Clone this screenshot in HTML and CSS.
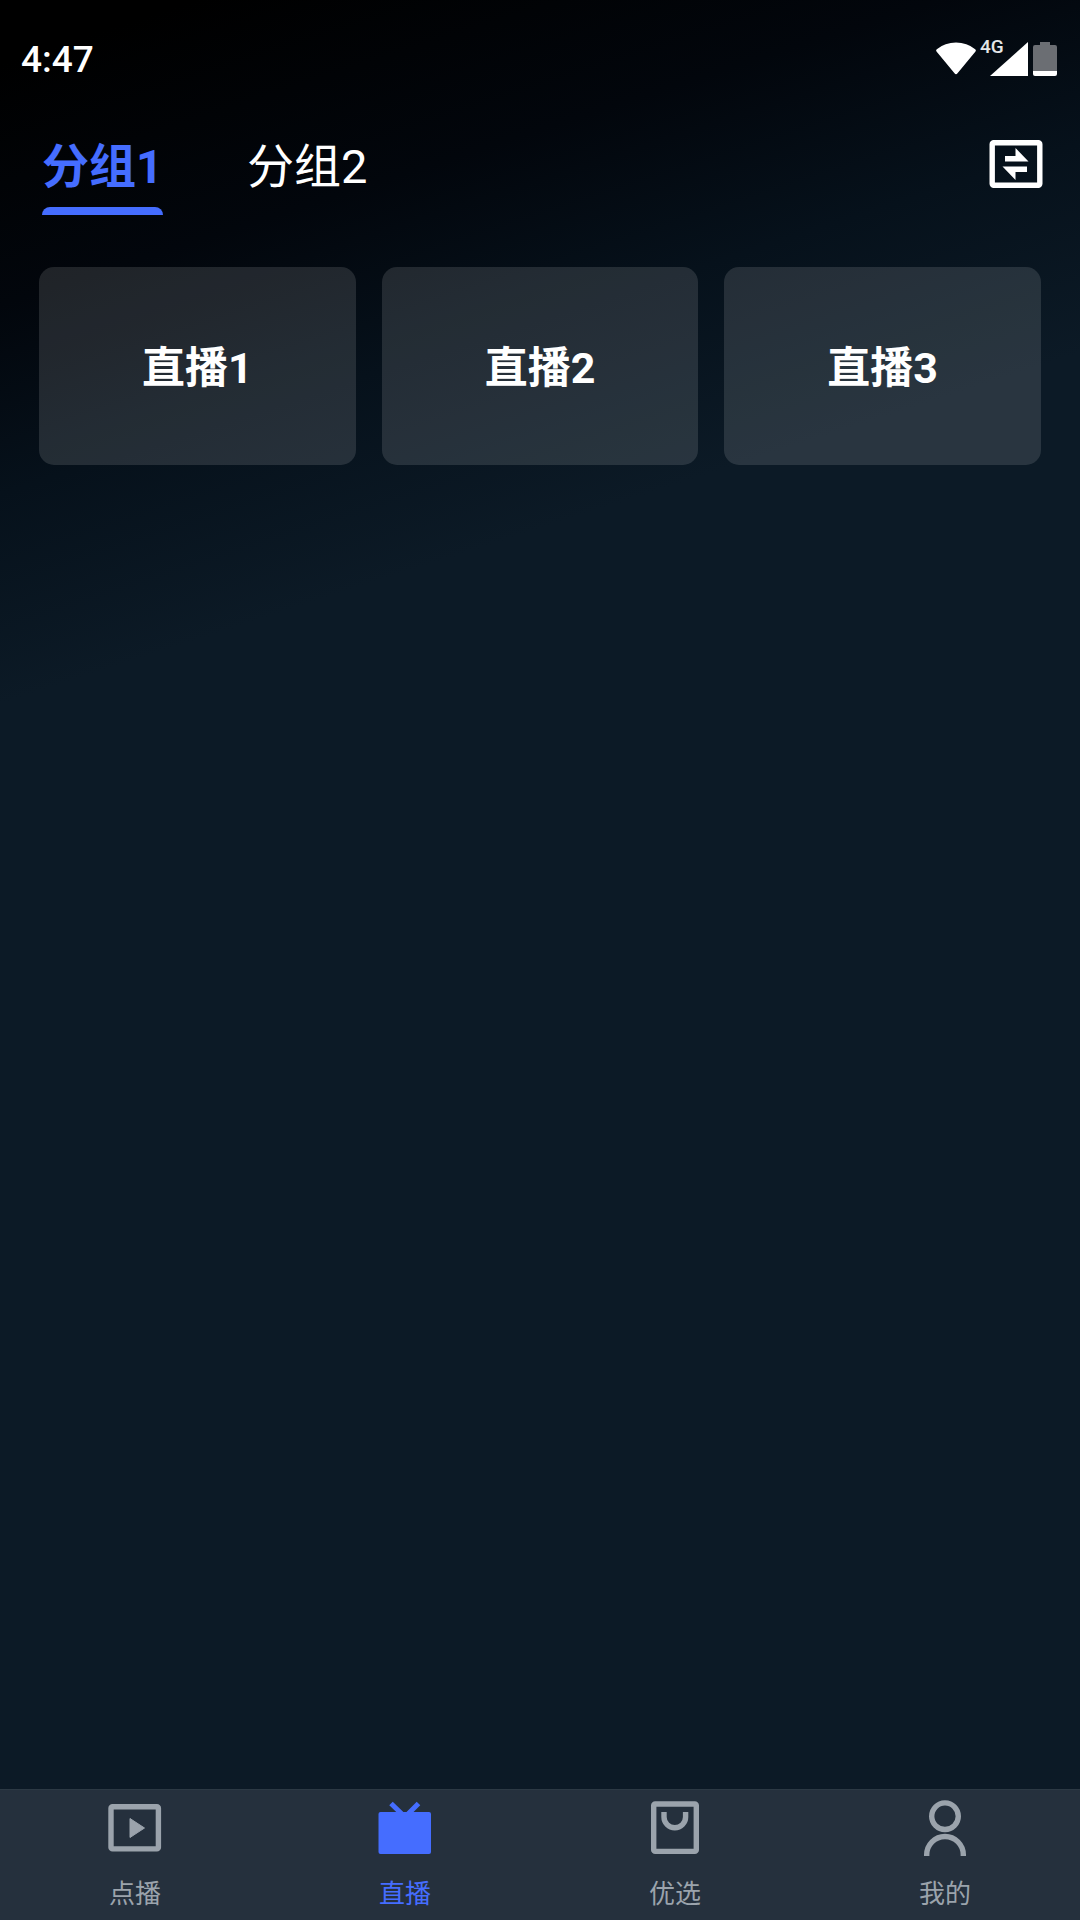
FILE: index.html
```html
<!DOCTYPE html>
<html lang="zh-CN">
<head>
<meta charset="utf-8">
<meta name="viewport" content="width=device-width, initial-scale=1">
<title>直播</title>
<link rel="stylesheet" href="styles.css">
</head>
<body>
<div class="app">
  <div class="status">
    <time class="clock">4:47</time>
    <div class="indicators">
      <svg class="wifi" width="42" height="34" viewBox="0 0 42 34" aria-hidden="true"><path d="M1.800 7.200Q10 .5 21 .5T40.200 7.200Q41.500 8.200 40.500 9.500L22.500 31.300Q21 33 19.500 31.300L1.500 9.500Q.5 8.200 1.800 7.200Z" fill="#fff"/></svg>
      <div class="signal">
        <span class="network">4G</span>
        <svg width="38" height="34" viewBox="0 0 38 34" aria-hidden="true"><path d="M38 0V34H0Z" fill="#fff"/></svg>
      </div>
      <svg width="24" height="34" viewBox="0 0 24 34" aria-hidden="true"><path d="M7 0H17V3H22Q24 3 24 5V29H0V5Q0 3 2 3H7Z" fill="#6b6e73"/><path d="M0 29H24V32Q24 34 22 34H2Q0 34 0 32Z" fill="#fff"/></svg>
    </div>
  </div>

  <header class="header">
    <div class="tabs" role="tablist">
      <button class="tab tab-active" role="tab" aria-selected="true">分组1</button>
      <button class="tab" role="tab" aria-selected="false">分组2</button>
    </div>
    <button class="switch" aria-label="切换">
      <svg width="54" height="48" viewBox="0 0 54 48" aria-hidden="true"><rect x="3.200" y="2.700" width="47.600" height="42.600" rx="1.500" fill="none" stroke="#fff" stroke-width="5.400"/><path d="M16 16H26.500V8L39.500 21.500H16ZM38 32H26.500V40L13.500 26.500H38Z" fill="#fff"/></svg>
    </button>
  </header>

  <main class="channels">
    <button class="channel">直播1</button>
    <button class="channel">直播2</button>
    <button class="channel">直播3</button>
  </main>

  <nav class="bottom-nav">
    <a class="nav-item" href="#vod">
      <svg width="56" height="56" viewBox="0 0 56 56" aria-hidden="true"><rect x="4" y="6.700" width="47.400" height="42.200" rx="1.500" fill="none" stroke="currentColor" stroke-width="5.400"/><path d="M23 18.500L37.500 28L23 37.500Z" fill="currentColor" stroke="currentColor" stroke-linejoin="round"/></svg>
      <span>点播</span>
    </a>
    <a class="nav-item nav-active" href="#live" aria-current="page">
      <svg width="56" height="56" viewBox="0 0 56 56" aria-hidden="true"><rect x="1.500" y="12" width="52.500" height="42" rx="2" fill="currentColor"/><path d="M14 3.500L28 17L41.500 3.500" fill="none" stroke="currentColor" stroke-width="5"/></svg>
      <span>直播</span>
    </a>
    <a class="nav-item" href="#picks">
      <svg width="56" height="56" viewBox="0 0 56 56" aria-hidden="true"><rect x="6.700" y="4" width="42.600" height="47.400" rx="1.500" fill="none" stroke="currentColor" stroke-width="5.400"/><path d="M17 12V17A10.800 10.800 0 0 0 38.600 17V12" fill="none" stroke="currentColor" stroke-width="5.400"/></svg>
      <span>优选</span>
    </a>
    <a class="nav-item" href="#me">
      <svg width="56" height="56" viewBox="0 0 56 56" aria-hidden="true"><circle cx="28" cy="16.200" r="13.300" fill="none" stroke="currentColor" stroke-width="5.400"/><path d="M9.700 56V54.800A18.300 18.300 0 0 1 46.300 54.800V56" fill="none" stroke="currentColor" stroke-width="5.400"/></svg>
      <span>我的</span>
    </a>
  </nav>
</div>
</body>
</html>
```

FILE: styles.css
```css
* {
  box-sizing: border-box;
}

body {
  margin: 0;
  background: #0c1a26;
  color: #fff;
  font-family: Roboto, "Noto Sans CJK SC", sans-serif;
}

button {
  margin: 0;
  padding: 0;
  border: 0;
  background: none;
  color: inherit;
  font: inherit;
}

svg {
  display: block;
}

.app {
  display: flex;
  flex-direction: column;
  min-height: 100vh;
  background: linear-gradient(162deg, #000 60px, #02060c 290px, #06111b 470px, #0c1a26 670px);
}

.status {
  display: flex;
  justify-content: space-between;
  align-items: flex-start;
  padding: 38px 23px 0 21px;
}

.clock {
  font-size: 37px;
  font-weight: 500;
  line-height: 44px;
}

.indicators {
  display: flex;
  gap: 5px;
  padding-top: 4px;
}

.wifi {
  margin-right: 8px;
}

.signal {
  position: relative;
}

.network {
  position: absolute;
  top: -5px;
  left: -10px;
  font-size: 19px;
  font-weight: 500;
  line-height: 20px;
  color: #e4e6e8;
}

.header {
  display: flex;
  justify-content: space-between;
  align-items: flex-start;
  padding: 57px 37px 0 42px;
}

.tabs {
  display: flex;
  gap: 84px;
}

.tab {
  padding-bottom: 12px;
  border-bottom: 8px solid transparent;
  font-size: 47px;
  line-height: 56px;
}

.tab-active {
  position: relative;
  color: #456dff;
  font-weight: 700;
}

.tab-active::after {
  content: "";
  position: absolute;
  right: 0;
  bottom: -8px;
  left: 0;
  height: 8px;
  border-radius: 8px 8px 0 0;
  background: #456dff;
}

.switch {
  margin-top: 1px;
}

.channels {
  display: grid;
  grid-template-columns: repeat(3, 1fr);
  gap: 26px;
  padding: 52px 39px;
}

.channel {
  height: 198px;
  padding-top: 4px;
  border-radius: 15px;
  background: rgba(255, 255, 255, 0.12);
  font-size: 43px;
  font-weight: 700;
  line-height: 48px;
}

.bottom-nav {
  display: grid;
  grid-template-columns: repeat(4, 1fr);
  margin-top: auto;
  padding: 10px 0 8px;
  border-top: 1px solid #2c3944;
  background: #25303d;
}

.nav-item {
  display: flex;
  flex-direction: column;
  align-items: center;
  gap: 20px;
  color: #9ba3ac;
  font-size: 26px;
  line-height: 36px;
  text-decoration: none;
}

.nav-active {
  color: #456dff;
}
```
